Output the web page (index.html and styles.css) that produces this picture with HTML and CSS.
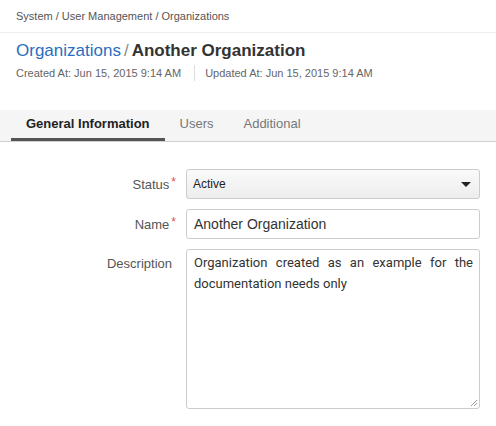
FILE: index.html
```html
<!DOCTYPE html>
<html>
<head>
<meta charset="utf-8">
<link rel="stylesheet" href="styles.css">
</head>
<body>
<div class="breadcrumb">System / User Management / Organizations</div>
<div class="header">
  <h1 class="title"><a class="title-link">Organizations</a><span class="title-sep">/</span><span class="title-name">Another Organization</span></h1>
  <div class="meta">
    <span class="meta-item">Created At: Jun 15, 2015 9:14 AM</span>
    <span class="meta-div"></span>
    <span class="meta-item">Updated At: Jun 15, 2015 9:14 AM</span>
  </div>
</div>
<div class="tabs">
  <div class="tab active">General Information</div>
  <div class="tab">Users</div>
  <div class="tab">Additional</div>
</div>
<form class="form">
  <div class="row">
    <label class="label">Status<span class="req">*</span></label>
    <div class="control select">
      <span>Active</span>
      <span class="caret"></span>
    </div>
  </div>
  <div class="row">
    <label class="label">Name<span class="req">*</span></label>
    <div class="control input">Another Organization</div>
  </div>
  <div class="row">
    <label class="label label-top">Description</label>
    <div class="control textarea">
      <div class="ta-text">Organization created as an example for the documentation needs only</div>
      <svg class="grip" width="8" height="8" viewBox="0 0 8 8"><path d="M7 1L1 7M7 4L4 7" stroke="#999" stroke-width="1"/></svg>
    </div>
  </div>
</form>
</body>
</html>
```
FILE: styles.css
```css
* { box-sizing: border-box; }
body {
  margin: 0;
  font-family: "Liberation Sans", Arial, sans-serif;
  color: #333;
  background: #fff;
}
.breadcrumb {
  height: 33px;
  line-height: 32px;
  padding: 0 16px;
  font-size: 11px;
  color: #555;
  border-bottom: 1px solid #eeeeee;
}
.header {
  padding: 6px 16px 0;
  height: 77px;
}
.title {
  margin: 0;
  font-size: 17px;
  line-height: 23px;
  font-weight: normal;
}
.title-link { color: #2a6ebf; }
.title-sep { color: #888; margin: 0 3px 0 3px; }
.title-name { font-weight: bold; color: #333; }
.meta {
  margin-top: 3px;
  display: flex;
  align-items: center;
  font-size: 11px;
  line-height: 16px;
  color: #666;
}
.meta-div {
  width: 1px;
  height: 16px;
  background: #ddd;
  margin: 0 10px 0 13px;
}
.tabs {
  display: flex;
  height: 32px;
  background: #f5f5f5;
  border-bottom: 1px solid #cfcfcf;
  padding-left: 11px;
}
.tab {
  padding: 0 15px;
  font-size: 13px;
  line-height: 28px;
  color: #777;
  border-bottom: 3px solid transparent;
}
.tab.active {
  color: #222;
  font-weight: bold;
  border-bottom-color: #555;
}
.form {
  padding: 27px 16px 0 0;
  display: flex;
  flex-direction: column;
  gap: 10px;
}
.row {
  display: flex;
  align-items: center;
}
.row:last-child { align-items: flex-start; }
.label {
  width: 177px;
  padding-right: 1px;
  text-align: right;
  font-size: 13px;
  color: #555;
  margin-right: 9px;
}
.label-top { padding-top: 7px; padding-right: 5px; }
.req { color: #d9534f; margin-left: 2px; position: relative; top: -3px; font-size: 12px; }
.control {
  flex: 1;
  border: 1px solid #cccccc;
  border-radius: 3px;
  height: 30px;
}
.select {
  display: flex;
  align-items: center;
  justify-content: space-between;
  padding: 0 8px 0 6px;
  font-size: 12px;
  color: #222;
  background: linear-gradient(#fafafa, #ededed);
}
.caret {
  width: 0;
  height: 0;
  border-left: 5px solid transparent;
  border-right: 5px solid transparent;
  border-top: 5px solid #222;
  margin-right: 0;
}
.input {
  display: flex;
  align-items: center;
  padding: 0 7px;
  font-size: 14px;
  color: #333;
}
.textarea {
  height: 160px;
  padding: 2px 6px 0 7px;
  position: relative;
}
.ta-text {
  font-family: Roboto, "Liberation Sans", sans-serif;
  font-size: 13px;
  line-height: 21px;
  color: #333;
  text-align: justify;
}
.grip {
  position: absolute;
  right: 1px;
  bottom: 1px;
}
```
